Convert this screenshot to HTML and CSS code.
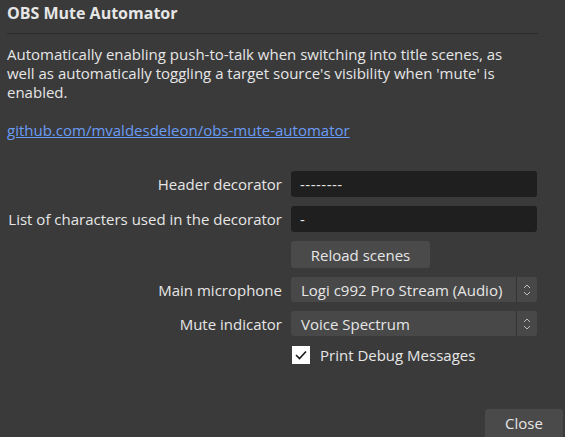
FILE: index.html
```html
<!DOCTYPE html>
<html>
<head>
<meta charset="utf-8">
<link rel="stylesheet" href="styles.css">
</head>
<body>
<div class="dialog">
  <h1 class="title">OBS Mute Automator</h1>
  <div class="rule"></div>
  <p class="desc">Automatically enabling push-to-talk when switching into title scenes, as well as automatically toggling a target source's visibility when 'mute' is enabled.</p>
  <a class="link" href="#">github.com/mvaldesdeleon/obs-mute-automator</a>
  <div class="form">
    <label class="lbl">Header decorator</label>
    <div class="input">--------</div>
    <label class="lbl">List of characters used in the decorator</label>
    <div class="input">-</div>
    <div></div>
    <div><button class="btn reload">Reload scenes</button></div>
    <label class="lbl">Main microphone</label>
    <div class="combo"><span class="combo-text">Logi c992 Pro Stream (Audio)</span><span class="spin"><svg width="8" height="14" viewBox="0 0 8 14"><path d="M1 5 L4 2 L7 5 M1 9 L4 12 L7 9" fill="none" stroke="#bdbdbd" stroke-width="1"/></svg></span></div>
    <label class="lbl">Mute indicator</label>
    <div class="combo"><span class="combo-text">Voice Spectrum</span><span class="spin"><svg width="8" height="14" viewBox="0 0 8 14"><path d="M1 5 L4 2 L7 5 M1 9 L4 12 L7 9" fill="none" stroke="#bdbdbd" stroke-width="1"/></svg></span></div>
    <div></div>
    <div class="check-row"><span class="checkbox"><svg width="14" height="12" viewBox="0 0 14 12"><path d="M2 6 L5.5 9.5 L12 2.5" fill="none" stroke="#1a1a1a" stroke-width="1.6"/></svg></span><span>Print Debug Messages</span></div>
  </div>
  <div class="footer"><button class="btn close">Close</button></div>
</div>
</body>
</html>
```

FILE: styles.css
```css
html, body {
  margin: 0;
  padding: 0;
  background: #3a3a3a;
  height: 100%;
}
body {
  font-family: "Open Sans", "Noto Sans", sans-serif;
  font-size: 15px;
  color: #e6e6e6;
  overflow: hidden;
}
.dialog {
  height: 437px;
  box-sizing: border-box;
  padding: 0 2px 0 7px;
  display: flex;
  flex-direction: column;
}
.title {
  margin: 3px 0 0 0;
  font-size: 16px;
  font-weight: bold;
  line-height: 20px;
}
.rule {
  margin: 10px 25px 0 0;
  height: 1px;
  background: #2b2b2b;
}
.desc {
  margin: 11px 0 0 0;
  line-height: 19px;
  width: 520px;
}
.link {
  margin-top: 19px;
  color: #6b9cf5;
  line-height: 19px;
  align-self: flex-start;
}
.form {
  margin-top: 31px;
  display: grid;
  grid-template-columns: 275px 246px;
  column-gap: 9px;
  row-gap: 9px;
  align-items: center;
}
.lbl {
  text-align: right;
  white-space: nowrap;
}
.input {
  height: 26px;
  background: #1f1f1f;
  border-radius: 3px;
  box-sizing: border-box;
  padding: 0 9px;
  line-height: 26px;
  font-size: 15px;
  letter-spacing: 0.5px;
}
.btn {
  font-family: inherit;
  font-size: 15px;
  color: #e6e6e6;
  background: #4a4a4a;
  border: none;
  border-radius: 3px;
  padding: 0;
}
.reload {
  width: 139px;
  height: 27px;
  display: block;
}
.combo {
  height: 25px;
  background: #484848;
  border-radius: 3px;
  display: flex;
  align-items: center;
}
.combo-text {
  flex: 1;
  padding-left: 10px;
  white-space: nowrap;
  overflow: hidden;
}
.spin {
  width: 20px;
  height: 25px;
  border-left: 1px solid #333;
  display: flex;
  align-items: center;
  justify-content: center;
}
.check-row {
  margin-top: 0;
  display: flex;
  align-items: center;
  gap: 10px;
  height: 19px;
}
.checkbox {
  width: 18px;
  height: 18px;
  background: #fff;
  display: flex;
  align-items: center;
  justify-content: center;
  margin-left: 1px;
}
.footer {
  margin-top: auto;
  display: flex;
  justify-content: flex-end;
}
.close {
  width: 78px;
  height: 28px;
  border-radius: 3px 3px 0 0;
}
```
